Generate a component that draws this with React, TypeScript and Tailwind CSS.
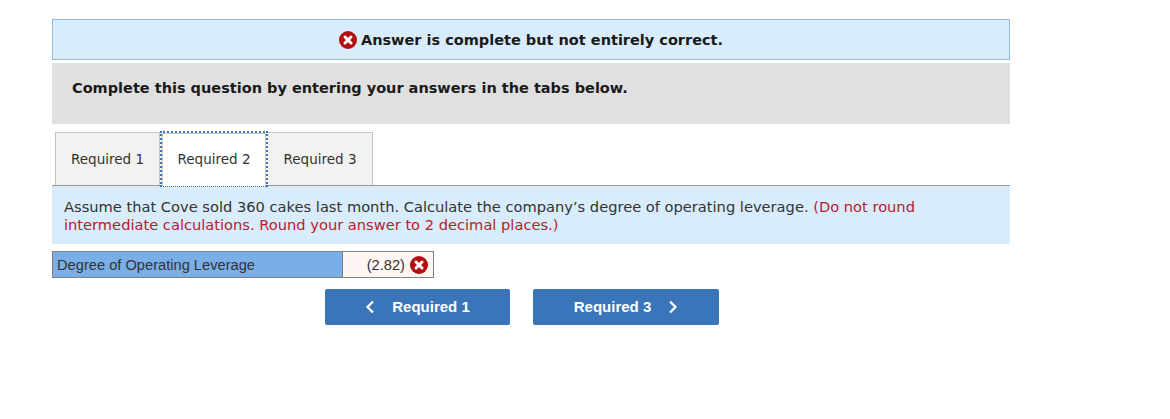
import React from "react";

const XIcon = ({ size = 18 }: { size?: number }) => (
  <svg width={size} height={size} viewBox="0 0 18 18" className="shrink-0">
    <circle cx="9" cy="9" r="9" fill="#b30f12" />
    <path d="M6 6 12 12M12 6 6 12" stroke="#fff" strokeWidth="3" strokeLinecap="round" />
  </svg>
);

const Chevron = ({ dir }: { dir: "left" | "right" }) => (
  <svg width="10" height="14" viewBox="0 0 10 14" className="shrink-0">
    <path
      d={dir === "left" ? "M8 1.5 2.5 7 8 12.5" : "M2 1.5 7.5 7 2 12.5"}
      fill="none"
      stroke="#fff"
      strokeWidth="2.2"
    />
  </svg>
);

export default function App() {
  return (
    <div className="min-h-[419px] w-[1170px] bg-white pt-[19px] pl-[52px] font-['DejaVu_Sans',sans-serif]">
      <div className="w-[958px]">
        <div className="flex h-[41px] items-center justify-center gap-[4px] border border-[#94bbe3] bg-[#d9ecfb] text-[14.5px] font-bold text-[#1a1a1a]">
          <XIcon />
          <span className="pt-[2px]">Answer is complete but not entirely correct.</span>
        </div>

        <div className="mt-[3px] flex h-[61px] items-start bg-[#e0e0e0] pt-[15px] pl-[20px] text-[14.5px] font-bold text-[#1a1a1a]">
          Complete this question by entering your answers in the tabs below.
        </div>

        <div className="mt-[8px] flex h-[54px] items-stretch border-b border-[#999] pl-[3px] text-[13.5px] text-[#333]">
          <div className="flex w-[105px] items-center justify-center border border-b-0 border-[#c4c4c4] bg-[#f2f2f2]">
            Required 1
          </div>
          <div className="relative z-10 -mt-[1px] -mb-[2px] w-[108px] border-2 border-b border-dotted border-[#3a75b9] bg-white">
            <div className="flex h-full items-center justify-center border-x border-t border-[#c4c4c4] pb-[2px]">
              Required 2
            </div>
          </div>
          <div className="flex w-[105px] items-center justify-center border border-b-0 border-l-0 border-[#c4c4c4] bg-[#f2f2f2]">
            Required 3
          </div>
        </div>

        <div className="h-[58px] bg-[#d9ecfb] px-[12px] pt-[12px] text-[14.65px] leading-[18px] text-[#333]">
          Assume that Cove sold 360 cakes last month. Calculate the company’s degree of operating leverage.{" "}
          <span className="text-[#b5202c]">
            (Do not round intermediate calculations. Round your answer to 2 decimal places.)
          </span>
        </div>

        <div className="mt-[7px] flex h-[27px] w-[382px] border border-[#7f7f7f] font-['Liberation_Sans',sans-serif] text-[14.67px] text-[#333]">
          <div className="flex w-[290px] items-center border-r border-[#7f7f7f] bg-[#7aaee6] pt-[1px] pl-[4px]">
            Degree of Operating Leverage
          </div>
          <div className="flex flex-1 items-center justify-end gap-[5px] bg-[#fff5f3] pr-[5px]">
            <span className="pt-[1px]">(2.82)</span>
            <XIcon />
          </div>
        </div>

        <div className="mt-[11px] ml-[273px] flex gap-[23px] font-['Liberation_Sans',sans-serif] text-[15px] font-bold text-white">
          <div className="flex h-[36px] w-[185px] items-center justify-center gap-[17px] rounded-[2px] bg-[#3a75b9]">
            <Chevron dir="left" />
            <span className="pt-[1px]">Required 1</span>
          </div>
          <div className="flex h-[36px] w-[186px] items-center justify-center gap-[17px] rounded-[2px] bg-[#3a75b9]">
            <span className="pt-[1px]">Required 3</span>
            <Chevron dir="right" />
          </div>
        </div>
      </div>
    </div>
  );
}
